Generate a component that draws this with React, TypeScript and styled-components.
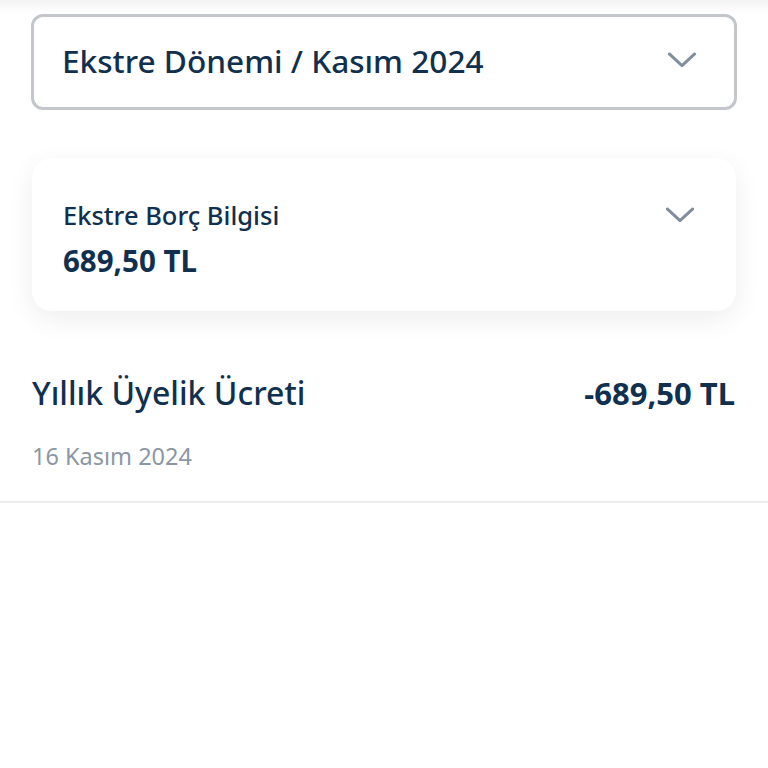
import React from 'react';
import styled, { createGlobalStyle } from 'styled-components';

const GlobalStyle = createGlobalStyle`
  html, body {
    margin: 0;
    padding: 0;
    background: #ffffff;
  }
  body {
    font-family: 'Noto Sans', 'Open Sans', sans-serif;
    color: #0f2c4d;
  }
`;

const Page = styled.div`
  width: 768px;
  min-height: 768px;
  background: #ffffff;
`;

const TopSection = styled.div`
  padding: 14px 31px 32px 31px;
  overflow: hidden;
  background: linear-gradient(to bottom, #f3f3f3 0px, #ffffff 14px);
  display: flex;
  flex-direction: column;
  gap: 48px;
`;

const PeriodSelect = styled.div`
  height: 96px;
  box-sizing: border-box;
  border: 3px solid #c3c7cb;
  border-radius: 12px;
  background: #ffffff;
  display: flex;
  align-items: center;
  justify-content: space-between;
  padding: 0 36px 4px 28px;
`;

const PeriodText = styled.div`
  font-size: 31.6px;
  font-weight: 500;
  color: #10304f;
`;

const DebtCard = styled.div`
  margin: 0 1px;
  height: 153px;
  box-sizing: border-box;
  border-radius: 20px;
  background: #ffffff;
  box-shadow: 0 8px 28px rgba(0, 0, 0, 0.07);
  display: flex;
  justify-content: space-between;
  align-items: flex-start;
  padding: 40px 40px 0 31px;
`;

const DebtInfo = styled.div`
  display: flex;
  flex-direction: column;
  gap: 8px;
`;

const DebtLabel = styled.div`
  font-size: 25.5px;
  font-weight: 500;
  color: #10304f;
`;

const DebtAmount = styled.div`
  font-size: 29.5px;
  font-weight: 700;
  color: #10304f;
`;

const Chevron = ({ size = 32 }: { size?: number }) => (
  <svg width={size} height={size * 0.55} viewBox="0 0 32 18" fill="none">
    <path d="M3 3 L16 15 L29 3" stroke="#7f8d9c" strokeWidth="3" strokeLinecap="round" strokeLinejoin="round" />
  </svg>
);

const ChevronWrap = styled.div<{ $offset: number }>`
  display: flex;
  margin-top: ${({ $offset }) => $offset}px;
`;

const Transaction = styled.div`
  padding: 28px 33px 29px 32px;
  border-bottom: 2px solid #ececec;
  display: flex;
  flex-direction: column;
  gap: 26px;
`;

const TxTop = styled.div`
  display: flex;
  justify-content: space-between;
  align-items: center;
`;

const TxTitle = styled.div`
  font-size: 32px;
  font-weight: 500;
  color: #10304f;
`;

const TxAmount = styled.div`
  font-size: 31px;
  font-weight: 700;
  color: #10304f;
`;

const TxDate = styled.div`
  font-size: 23.5px;
  color: #8b97a5;
`;

export default function App() {
  return (
    <Page>
      <GlobalStyle />
      <TopSection>
        <PeriodSelect>
          <PeriodText>Ekstre Dönemi / Kasım 2024</PeriodText>
          <Chevron size={32} />
        </PeriodSelect>
        <DebtCard>
          <DebtInfo>
            <DebtLabel>Ekstre Borç Bilgisi</DebtLabel>
            <DebtAmount>689,50 TL</DebtAmount>
          </DebtInfo>
          <ChevronWrap $offset={8}>
            <Chevron size={32} />
          </ChevronWrap>
        </DebtCard>
      </TopSection>
      <Transaction>
        <TxTop>
          <TxTitle>Yıllık Üyelik Ücreti</TxTitle>
          <TxAmount>-689,50 TL</TxAmount>
        </TxTop>
        <TxDate>16 Kasım 2024</TxDate>
      </Transaction>
    </Page>
  );
}
